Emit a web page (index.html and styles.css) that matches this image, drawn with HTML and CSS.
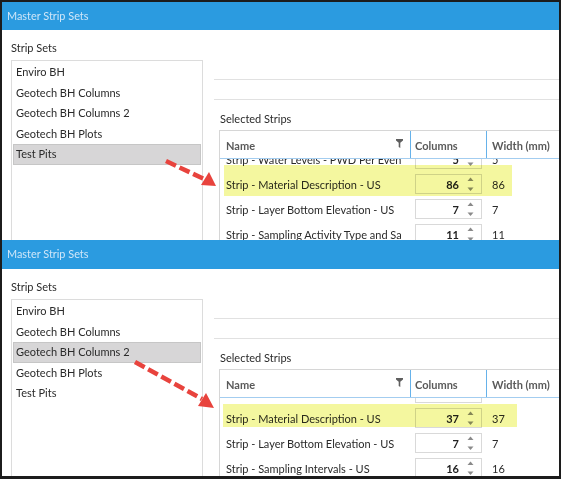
FILE: index.html
```html
<!DOCTYPE html>
<html>
<head>
<meta charset="utf-8">
<link rel="stylesheet" href="styles.css">
</head>
<body>
<div class="frame">
  <section class="panel p1">
    <header class="titlebar">Master Strip Sets</header>
    <div class="content">
      <div class="left">
        <div class="label">Strip Sets</div>
        <ul class="list">
          <li>Enviro BH</li>
          <li>Geotech BH Columns</li>
          <li>Geotech BH Columns 2</li>
          <li>Geotech BH Plots</li>
          <li class="sel">Test Pits</li>
        </ul>
      </div>
      <div class="right">
        <div class="field"></div>
        <div class="label rlabel">Selected Strips</div>
        <div class="grid">
          <div class="ghead">
            <div class="hname"><span>Name</span>
              <svg class="funnel" width="7" height="9" viewBox="0 0 7 9"><polygon points="0,0 7,0 7,1.4 4.3,3.8 4.3,9 2.7,8 2.7,3.8 0,1.4" fill="#5f5f5f"/></svg>
            </div>
            <div class="hcols">Columns</div>
            <div class="hwidth">Width (mm)</div>
          </div>
          <div class="gbody">
            <div class="rows">
              <div class="row">
                <div class="cname"><span class="ntext">Strip - Water Levels - PWD Per Event</span></div>
                <div class="ccols"><div class="spin"><span class="val">5</span><svg class="arr" width="7" height="15" viewBox="0 0 7 15"><polygon points="0.5,4 3.5,0.5 6.5,4" fill="#8a8a8a"/><polygon points="0.5,10.5 3.5,14 6.5,10.5" fill="#8a8a8a"/></svg></div></div>
                <div class="cwidth">5</div>
              </div>
              <div class="row">
                <div class="cname"><span class="ntext">Strip - Material Description - US</span></div>
                <div class="ccols"><div class="spin"><span class="val">86</span><svg class="arr" width="7" height="15" viewBox="0 0 7 15"><polygon points="0.5,4 3.5,0.5 6.5,4" fill="#8a8a8a"/><polygon points="0.5,10.5 3.5,14 6.5,10.5" fill="#8a8a8a"/></svg></div></div>
                <div class="cwidth">86</div>
              </div>
              <div class="row">
                <div class="cname"><span class="ntext">Strip - Layer Bottom Elevation - US</span></div>
                <div class="ccols"><div class="spin"><span class="val">7</span><svg class="arr" width="7" height="15" viewBox="0 0 7 15"><polygon points="0.5,4 3.5,0.5 6.5,4" fill="#8a8a8a"/><polygon points="0.5,10.5 3.5,14 6.5,10.5" fill="#8a8a8a"/></svg></div></div>
                <div class="cwidth">7</div>
              </div>
              <div class="row">
                <div class="cname"><span class="ntext">Strip - Sampling Activity Type and Sample</span></div>
                <div class="ccols"><div class="spin"><span class="val">11</span><svg class="arr" width="7" height="15" viewBox="0 0 7 15"><polygon points="0.5,4 3.5,0.5 6.5,4" fill="#8a8a8a"/><polygon points="0.5,10.5 3.5,14 6.5,10.5" fill="#8a8a8a"/></svg></div></div>
                <div class="cwidth">11</div>
              </div>
            </div>
          </div>
        </div>
      </div>
    </div>
    <div class="hl hl1"></div>
  </section>

  <section class="panel p2">
    <header class="titlebar">Master Strip Sets</header>
    <div class="content">
      <div class="left">
        <div class="label">Strip Sets</div>
        <ul class="list">
          <li>Enviro BH</li>
          <li>Geotech BH Columns</li>
          <li class="sel">Geotech BH Columns 2</li>
          <li>Geotech BH Plots</li>
          <li>Test Pits</li>
        </ul>
      </div>
      <div class="right">
        <div class="field"></div>
        <div class="label rlabel">Selected Strips</div>
        <div class="grid">
          <div class="ghead">
            <div class="hname"><span>Name</span>
              <svg class="funnel" width="7" height="9" viewBox="0 0 7 9"><polygon points="0,0 7,0 7,1.4 4.3,3.8 4.3,9 2.7,8 2.7,3.8 0,1.4" fill="#5f5f5f"/></svg>
            </div>
            <div class="hcols">Columns</div>
            <div class="hwidth">Width (mm)</div>
          </div>
          <div class="gbody">
            <div class="rows">
              <div class="row">
                <div class="cname"><span class="ntext"></span></div>
                <div class="ccols"><div class="spin"><span class="val"></span></div></div>
                <div class="cwidth"></div>
              </div>
              <div class="row">
                <div class="cname"><span class="ntext">Strip - Material Description - US</span></div>
                <div class="ccols"><div class="spin"><span class="val">37</span><svg class="arr" width="7" height="15" viewBox="0 0 7 15"><polygon points="0.5,4 3.5,0.5 6.5,4" fill="#8a8a8a"/><polygon points="0.5,10.5 3.5,14 6.5,10.5" fill="#8a8a8a"/></svg></div></div>
                <div class="cwidth">37</div>
              </div>
              <div class="row">
                <div class="cname"><span class="ntext">Strip - Layer Bottom Elevation - US</span></div>
                <div class="ccols"><div class="spin"><span class="val">7</span><svg class="arr" width="7" height="15" viewBox="0 0 7 15"><polygon points="0.5,4 3.5,0.5 6.5,4" fill="#8a8a8a"/><polygon points="0.5,10.5 3.5,14 6.5,10.5" fill="#8a8a8a"/></svg></div></div>
                <div class="cwidth">7</div>
              </div>
              <div class="row">
                <div class="cname"><span class="ntext">Strip - Sampling Intervals - US</span></div>
                <div class="ccols"><div class="spin"><span class="val">16</span><svg class="arr" width="7" height="15" viewBox="0 0 7 15"><polygon points="0.5,4 3.5,0.5 6.5,4" fill="#8a8a8a"/><polygon points="0.5,10.5 3.5,14 6.5,10.5" fill="#8a8a8a"/></svg></div></div>
                <div class="cwidth">16</div>
              </div>
            </div>
          </div>
        </div>
      </div>
    </div>
    <div class="hl hl2"></div>
  </section>

  <svg class="overlay" width="561" height="479" viewBox="0 0 561 479">
    <g stroke="#e8433d" stroke-width="4.5" stroke-dasharray="11 4" fill="none">
      <line x1="166" y1="161" x2="204" y2="179"/>
      <line x1="135" y1="362" x2="202" y2="399"/>
    </g>
    <g fill="#e8433d">
      <polygon points="216,186 209,172 201,185"/>
      <polygon points="214,408 206,393 198,406"/>
    </g>
  </svg>
</div>
</body>
</html>
```

FILE: styles.css
```css
* { box-sizing: border-box; }

body {
  margin: 0;
  background: #1c1c1c;
  font-family: Lato, "Open Sans", sans-serif;
}

.frame {
  position: relative;
  width: 561px;
  height: 479px;
  padding: 2px 2px 3px 2px;
  display: flex;
  flex-direction: column;
}

.panel {
  position: relative;
  background: #fff;
  display: flex;
  flex-direction: column;
  overflow: hidden;
  flex: none;
}

.p1 { height: 238px; }
.p2 { height: 236px; }

.titlebar {
  flex: none;
  height: 28px;
  line-height: 28px;
  background: #2b9be0;
  color: #cfe6f8;
  font-size: 10.9px;
  padding-left: 5px;
}

.p2 .titlebar { height: 29px; }

.content {
  flex: 1;
  min-height: 0;
  display: flex;
  gap: 11px;
  padding-left: 9px;
}

.left {
  width: 192px;
  flex: none;
  display: flex;
  flex-direction: column;
}

.label {
  font-size: 11px;
  line-height: 16px;
  color: #2a2a2a;
  margin-top: 10px;
}

.list {
  flex: 1;
  margin: 4px 0 0;
  padding: 1px;
  list-style: none;
  border: 1px solid #dcdcdc;
  border-bottom: none;
}

.list li {
  height: 20.5px;
  line-height: 20.5px;
  padding-left: 3px;
  font-size: 11px;
  color: #2a2a2a;
  white-space: nowrap;
}

.list li.sel {
  background: #d7d6d7;
  box-shadow: inset 0 0 0 1px #c6c6c6;
}

.right {
  flex: 1;
  min-width: 0;
  display: flex;
  flex-direction: column;
}

.field {
  flex: none;
  height: 21px;
  margin-top: 49px;
  border-top: 1px solid #e1e1e1;
  border-bottom: 1px solid #e1e1e1;
}

.rlabel {
  margin-top: 11px;
  padding-left: 6px;
}

.grid {
  flex: 1;
  min-height: 0;
  margin: 3px 0 0 5px;
  border-left: 1px solid #d6d6d6;
  border-top: 1px solid #d6d6d6;
  display: flex;
  flex-direction: column;
}

.ghead {
  flex: none;
  height: 28px;
  display: flex;
  border-bottom: 1px solid #a3cdf0;
  font-size: 11px;
  font-weight: bold;
  color: #5a5a5a;
}

.ghead > div {
  display: flex;
  align-items: center;
  padding-top: 2px;
}

.hname {
  width: 191px;
  flex: none;
  justify-content: space-between;
  padding: 0 7px 0 6px;
  border-right: 1px solid #66b2ea;
}

.funnel { margin-top: -4px; }

.hcols {
  width: 76px;
  flex: none;
  padding-left: 4px;
  border-right: 1px solid #66b2ea;
}

.hwidth {
  flex: 1;
  padding-left: 5px;
  white-space: nowrap;
}

.gbody {
  flex: 1;
  min-height: 0;
  overflow: hidden;
}

.rows { margin-top: -12.5px; }
.p2 .rows { margin-top: -17.5px; }

.row {
  height: 25px;
  display: flex;
  align-items: center;
  font-size: 11px;
  color: #2a2a2a;
}

.cname {
  width: 191px;
  flex: none;
  padding-left: 6px;
}

.ntext {
  display: block;
  width: 176px;
  overflow: hidden;
  white-space: nowrap;
}

.ccols {
  width: 76px;
  flex: none;
  padding-left: 4px;
}

.spin {
  width: 67px;
  height: 20px;
  border: 1px solid #d9d9d9;
  display: flex;
  align-items: center;
}

.val {
  flex: 1;
  text-align: right;
  font-weight: bold;
  color: #222;
}

.arr {
  margin: 0 7px 0 8px;
}

.cwidth {
  padding-left: 5px;
}

.hl {
  position: absolute;
  background: #f4f79f;
  mix-blend-mode: multiply;
}

.hl1 { left: 222px; top: 163px; width: 288px; height: 31px; }
.hl2 { left: 221px; top: 164px; width: 294px; height: 23px; }

.overlay {
  position: absolute;
  left: 0;
  top: 0;
  pointer-events: none;
}
```
